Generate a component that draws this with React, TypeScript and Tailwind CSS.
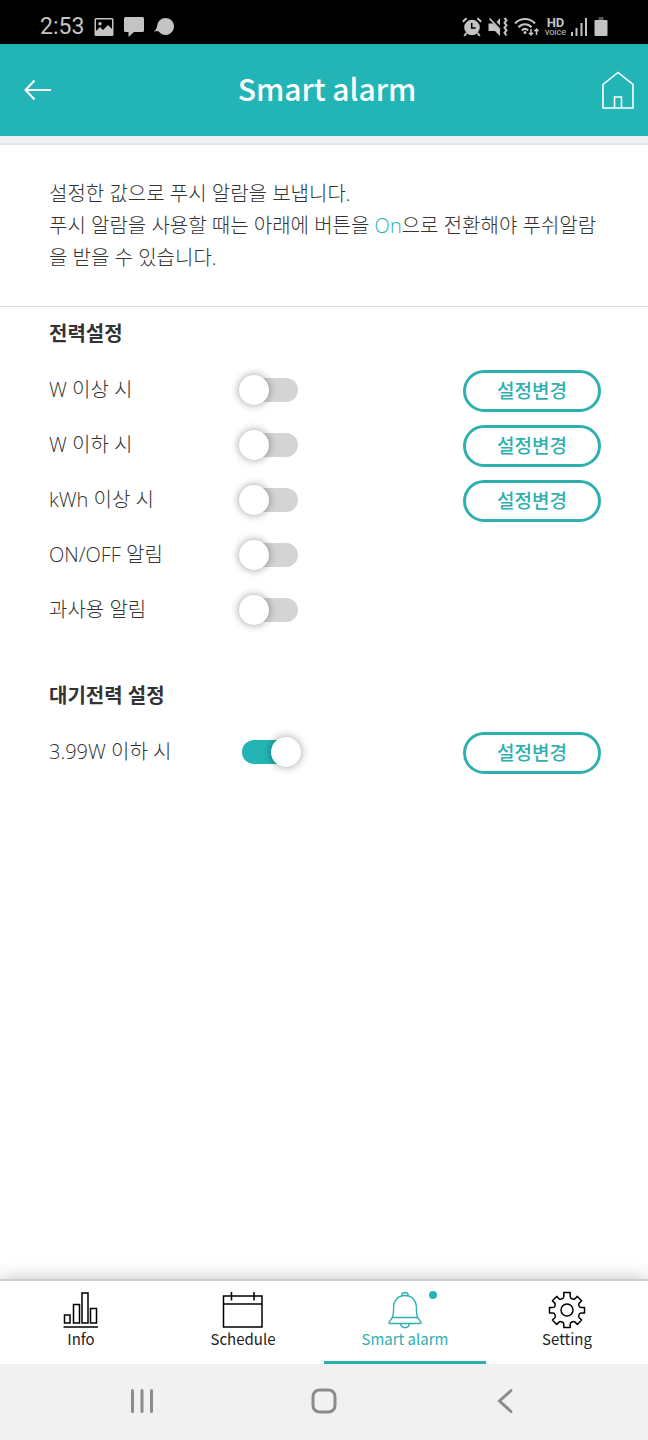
import React, { useState } from "react";

interface AlarmItem {
  id: string;
  label: string;
  on: boolean;
  editable: boolean;
}

const powerAlarms: AlarmItem[] = [
  { id: "w-over", label: "W 이상 시", on: false, editable: true },
  { id: "w-under", label: "W 이하 시", on: false, editable: true },
  { id: "kwh-over", label: "kWh 이상 시", on: false, editable: true },
  { id: "on-off", label: "ON/OFF 알림", on: false, editable: false },
  { id: "overuse", label: "과사용 알림", on: false, editable: false },
];

const standbyAlarms: AlarmItem[] = [
  { id: "standby", label: "3.99W 이하 시", on: true, editable: true },
];

const InfoIcon = () => (
  <svg width="36" height="38" viewBox="0 0 36 38" fill="none" stroke="currentColor" strokeWidth="1.5">
    <path d="M1.5 24h5.5v8h-5.5zM10.5 13.5h6v18.500h-6zM19 2h6v30h-6zM27.500 17.500h6v14.500h-6zM.5 36h34.500" />
  </svg>
);

const ScheduleIcon = () => (
  <svg width="42" height="38" viewBox="0 0 42 38" fill="none" stroke="currentColor" strokeWidth="1.5">
    <path d="M1.500 5h38.500v31h-38.500zM1.500 13h38.500M9.500 1v8.500M32 1v8.500" />
  </svg>
);

const BellIcon = () => (
  <svg width="36" height="38" viewBox="0 0 36 38" fill="none" stroke="currentColor" strokeWidth="1.400">
    <path d="M15 5.300V3.500c0-1 .8-1.800 1.800-1.800h2.400c1 0 1.800.8 1.800 1.800v1.800" />
    <path d="M5.300 26.500C6.500 24 6.600 21 6.600 17 6.600 9.500 11 4.500 18 4.500S29.400 9.500 29.400 17c0 4 .1 7 1.300 9.500" />
    <path d="M5.300 26.500h25.400l3 4.300c.7 1 .2 1.700-.9 1.700H3.200c-1.100 0-1.600-.7-.9-1.700z" />
    <path d="M13.500 32.700c.4 2.500 2.200 4 4.500 4s4.100-1.500 4.500-4" />
  </svg>
);

const SettingIcon = () => (
  <svg width="38" height="38" viewBox="0 0 38 38" fill="none" stroke="currentColor" strokeWidth="1.5" strokeLinejoin="round">
    <circle cx="19" cy="19" r="6" />
    <path d="M15.800 1.500h6.400v4.100c0 1 .3 1.500 1.200 1.900l1.400.6c.9.400 1.500.3 2.200-.4l2.300-2.300 4.300 4.400-2.300 2.300c-.7.7-.8 1.300-.4 2.200l.4 1.100c.3.800.8 1 1.700 1h3.500v5.700h-3.500c-.9 0-1.400.3-1.700 1.100l-.5 1.300c-.4.900-.3 1.500.4 2.200l2.400 2.300-4.300 4.400-2.300-2.300c-.7-.7-1.300-.8-2.200-.4l-1.400.6c-.9.400-1.200.9-1.200 1.900v3.300h-6.400v-3.300c0-1-.3-1.500-1.200-1.900l-1.400-.6c-.9-.4-1.500-.3-2.200.4l-2.300 2.300-4.300-4.400 2.400-2.300c.7-.7.8-1.300.4-2.200l-.5-1.300c-.3-.8-.8-1.100-1.700-1.100H1.500v-5.700H5c.9 0 1.400-.2 1.700-1l.4-1.100c.4-.9.3-1.500-.4-2.200L4.400 9.800l4.300-4.400L11 7.700c.7.7 1.300.8 2.200.4l1.400-.6c.9-.4 1.200-.9 1.200-1.900z" />
  </svg>
);

const tabs = [
  { name: "Info", href: "#info", icon: InfoIcon },
  { name: "Schedule", href: "#schedule", icon: ScheduleIcon },
  { name: "Smart alarm", href: "#alarm", icon: BellIcon },
  { name: "Setting", href: "#setting", icon: SettingIcon },
];

const StatusBar = () => (
  <div className="flex h-11 items-center justify-between bg-black px-10 pt-2.5 text-[#c4c4c4]">
    <div className="flex items-center gap-2.5">
      <span className="font-[Roboto] text-[23px] leading-8">2:53</span>
      <svg width="20" height="20" viewBox="0 0 20 20" fill="currentColor">
        <path fillRule="evenodd" d="M2 1h16a1.500 1.500 0 0 1 1.500 1.500v15A1.500 1.500 0 0 1 18 19H2a1.500 1.500 0 0 1-1.500-1.500v-15A1.500 1.500 0 0 1 2 1zm0 1.500V14l4-4 3 3 5-5 4 4V2.500zM6 5a1.700 1.700 0 1 1 0 3.400A1.700 1.700 0 0 1 6 5z" />
      </svg>
      <svg width="20" height="20" viewBox="0 0 20 20" fill="currentColor">
        <path d="M1.500 0h17A1.500 1.500 0 0 1 20 1.500v12a1.500 1.500 0 0 1-1.500 1.500H10l-5.500 5V15h-3A1.500 1.500 0 0 1 0 13.500v-12A1.500 1.500 0 0 1 1.500 0z" />
      </svg>
      <svg width="20" height="20" viewBox="0 0 20 20" fill="currentColor">
        <path d="M11.500 1a8.500 8.500 0 1 1-6.800 13.600C3.500 13.500 2 14 0 15c1.500-2.300 2.500-3.200 3-5.500A8.500 8.500 0 0 1 11.500 1z" />
      </svg>
    </div>
    <div className="flex items-center gap-[5px]">
      <svg width="20" height="20" viewBox="0 0 20 20" fill="none" stroke="currentColor">
        <circle cx="10" cy="10.500" r="7.800" fill="currentColor" stroke="none" />
        <path d="M9.700 6v5h4" stroke="#000" strokeWidth="1.600" />
        <path d="M.8 4.800L4.600 1.200M19.200 4.800l-3.800-3.600M4.500 16l-2.300 3M15.500 16l2.300 3" strokeWidth="2" />
      </svg>
      <svg width="22" height="20" viewBox="0 0 22 20" fill="currentColor">
        <path d="M1.500 6.500h4.500l7 6.500v6l-5-5H1.500zM13 1v7.500L9.500 5z" />
        <path d="M2.500 1.500L13 12.500" fill="none" stroke="currentColor" strokeWidth="1.800" />
        <path d="M17.500 1l2 2.300-2 2.500 2 2.500-2 2.500 2 2.500-2 2.500 2 2.700" fill="none" stroke="currentColor" strokeWidth="2" />
      </svg>
      <svg width="26" height="20" viewBox="0 0 26 20" fill="none" stroke="currentColor" strokeWidth="2">
        <path d="M1 6.500C6.500.5 15.500.5 21 6.500M4.500 10.300c3.700-4 9.300-4 13 0M7.800 13.500c1.900-1.900 4.500-1.900 6.400 0" />
        <circle cx="11" cy="15.500" r="1.500" fill="currentColor" stroke="none" />
        <path d="M17 12v6M15 15.800l2 2.200 2-2.200M22.500 18v-6M20.500 14.200l2-2.200 2 2.200" strokeWidth="1.500" />
      </svg>
      <span className="flex flex-col items-center font-[Roboto]">
        <span className="text-[13px] leading-[11px] font-bold">HD</span>
        <span className="text-[9px] leading-[9px]">voice</span>
      </span>
      <svg width="16" height="20" viewBox="0 0 16 20" fill="currentColor">
        <path d="M0 15h2v4H0zM4.500 11h2v8h-2zM9.500 6h2v13h-2zM14 1h2v18h-2z" />
      </svg>
      <svg width="14" height="20" viewBox="0 0 14 20" fill="currentColor" className="ml-0.5">
        <path d="M4.500 0h5v3h-5z" fill="#555" />
        <path d="M1.500 3h11a1 1 0 0 1 1 1v14a1 1 0 0 1-1 1h-11a1 1 0 0 1-1-1V4a1 1 0 0 1 1-1z" />
      </svg>
    </div>
  </div>
);

const Header = () => (
  <header className="flex h-[92px] items-center justify-between bg-[#23b5b6] pr-3.5 pl-6 text-white">
    <button type="button" aria-label="Back">
      <svg width="28" height="22" viewBox="0 0 28 22" fill="none" stroke="currentColor" strokeWidth="2">
        <path d="M27 11H2M10.500 1.500L1.500 11l9 9.500" />
      </svg>
    </button>
    <h1 className="pb-1 text-[30px] leading-10 font-medium">Smart alarm</h1>
    <a href="#home" aria-label="Home">
      <svg width="32" height="38" viewBox="0 0 32 38" fill="none" stroke="currentColor" strokeWidth="1.600">
        <path d="M1 13.500L16 1.500l15 12V37H1zM12.500 37V26h7v11" />
      </svg>
    </a>
  </header>
);

const AlarmRow: React.FC<{ item: AlarmItem }> = ({ item }) => {
  const [on, setOn] = useState(item.on);

  return (
    <li className="flex h-[42px] items-center">
      <label htmlFor={item.id} className="w-[193px] pb-0.5 text-xl leading-8">
        {item.label}
      </label>
      <input
        id={item.id}
        type="checkbox"
        role="switch"
        checked={on}
        onChange={() => setOn(!on)}
        className="relative mb-0.5 h-6 w-14 cursor-pointer appearance-none rounded-full bg-[#d4d4d4] before:absolute before:-top-[3px] before:-left-[3px] before:size-[30px] before:rounded-full before:bg-white before:shadow-[0_0_8px_rgba(0,0,0,0.4)] checked:bg-[#23b5b6] checked:before:left-[29px]"
      />
      {item.editable && (
        <button
          type="button"
          className="ml-auto h-[42px] w-[138px] rounded-full border-3 border-[#2fb0b0] text-[19px] leading-8 font-medium text-[#2fb0b0]"
        >
          설정변경
        </button>
      )}
    </li>
  );
};

const AlarmSection: React.FC<{ title: string; items: AlarmItem[] }> = ({
  title,
  items,
}) => (
  <section>
    <h2 className="text-xl leading-8 font-bold">{title}</h2>
    <ul className="mt-5 flex flex-col gap-[13px]">
      {items.map((item) => (
        <AlarmRow key={item.id} item={item} />
      ))}
    </ul>
  </section>
);

const TabBar = () => (
  <nav className="grid h-[85px] grid-cols-4 border-t-2 border-[#cfcfcf] bg-white shadow-[0_0_16px_rgba(0,0,0,0.25)]">
    {tabs.map((tab) => {
      const active = tab.name === "Smart alarm";
      const Icon = tab.icon;
      return (
        <a
          key={tab.name}
          href={tab.href}
          className={`relative flex flex-col items-center border-b-3 pt-2.5 ${
            active
              ? "border-[#2fb0b0] text-[#2fb0b0]"
              : "border-transparent text-black"
          }`}
        >
          <Icon />
          <span className={`text-[15px] leading-5 ${active ? "" : "text-[#222]"}`}>
            {tab.name}
          </span>
          {/* New alarm dot */}
          {active && (
            <span className="absolute top-2.5 left-[65%] size-2 rounded-full bg-[#23b5b6]" />
          )}
        </a>
      );
    })}
  </nav>
);

const SystemBar = () => (
  <div className="flex h-[76px] items-center justify-around bg-[#f1f1f1] px-[52px] pb-0.5 text-[#8c8c8c]">
    <button type="button" aria-label="Recent apps">
      <svg width="24" height="26" viewBox="0 0 24 26" fill="none" stroke="currentColor" strokeWidth="3" strokeLinecap="round">
        <path d="M2.500 2.500v21M12 2.500v21M21.500 2.500v21" />
      </svg>
    </button>
    <button type="button" aria-label="Home screen">
      <svg width="26" height="26" viewBox="0 0 26 26" fill="none" stroke="currentColor" strokeWidth="3">
        <rect x="2" y="2" width="22" height="22" rx="6.500" />
      </svg>
    </button>
    <button type="button" aria-label="Previous screen">
      <svg width="24" height="26" viewBox="0 0 24 26" fill="none" stroke="currentColor" strokeWidth="3" strokeLinecap="round">
        <path d="M17 2.500L5.500 13 17 23.500" />
      </svg>
    </button>
  </div>
);

const App: React.FC = () => {
  return (
    <div className="flex min-h-screen flex-col bg-white font-['Noto_Sans_CJK_KR',sans-serif] text-[#333]">
      <StatusBar />
      <Header />
      <div className="h-[9px] border-b-2 border-[#e2e4e6] bg-[#ebf1f5]" />

      <main className="flex-1 font-['Open_Sans','Noto_Sans_CJK_KR',sans-serif] font-light">
        <p className="border-b border-[#d9d9d9] pt-[33px] pr-[47px] pb-8 pl-[49px] text-xl leading-8">
          설정한 값으로 푸시 알람을 보냅니다.
          <br />
          푸시 알람을 사용할 때는 아래에 버튼을{" "}
          <span className="text-[#23b5b6]">On</span>으로 전환해야 푸쉬알람을 받을
          수 있습니다.
        </p>
        <div className="flex flex-col gap-12 pt-[11px] pr-[47px] pl-[49px]">
          <AlarmSection title="전력설정" items={powerAlarms} />
          <AlarmSection title="대기전력 설정" items={standbyAlarms} />
        </div>
      </main>

      <TabBar />
      <SystemBar />
    </div>
  );
};

export default App;
